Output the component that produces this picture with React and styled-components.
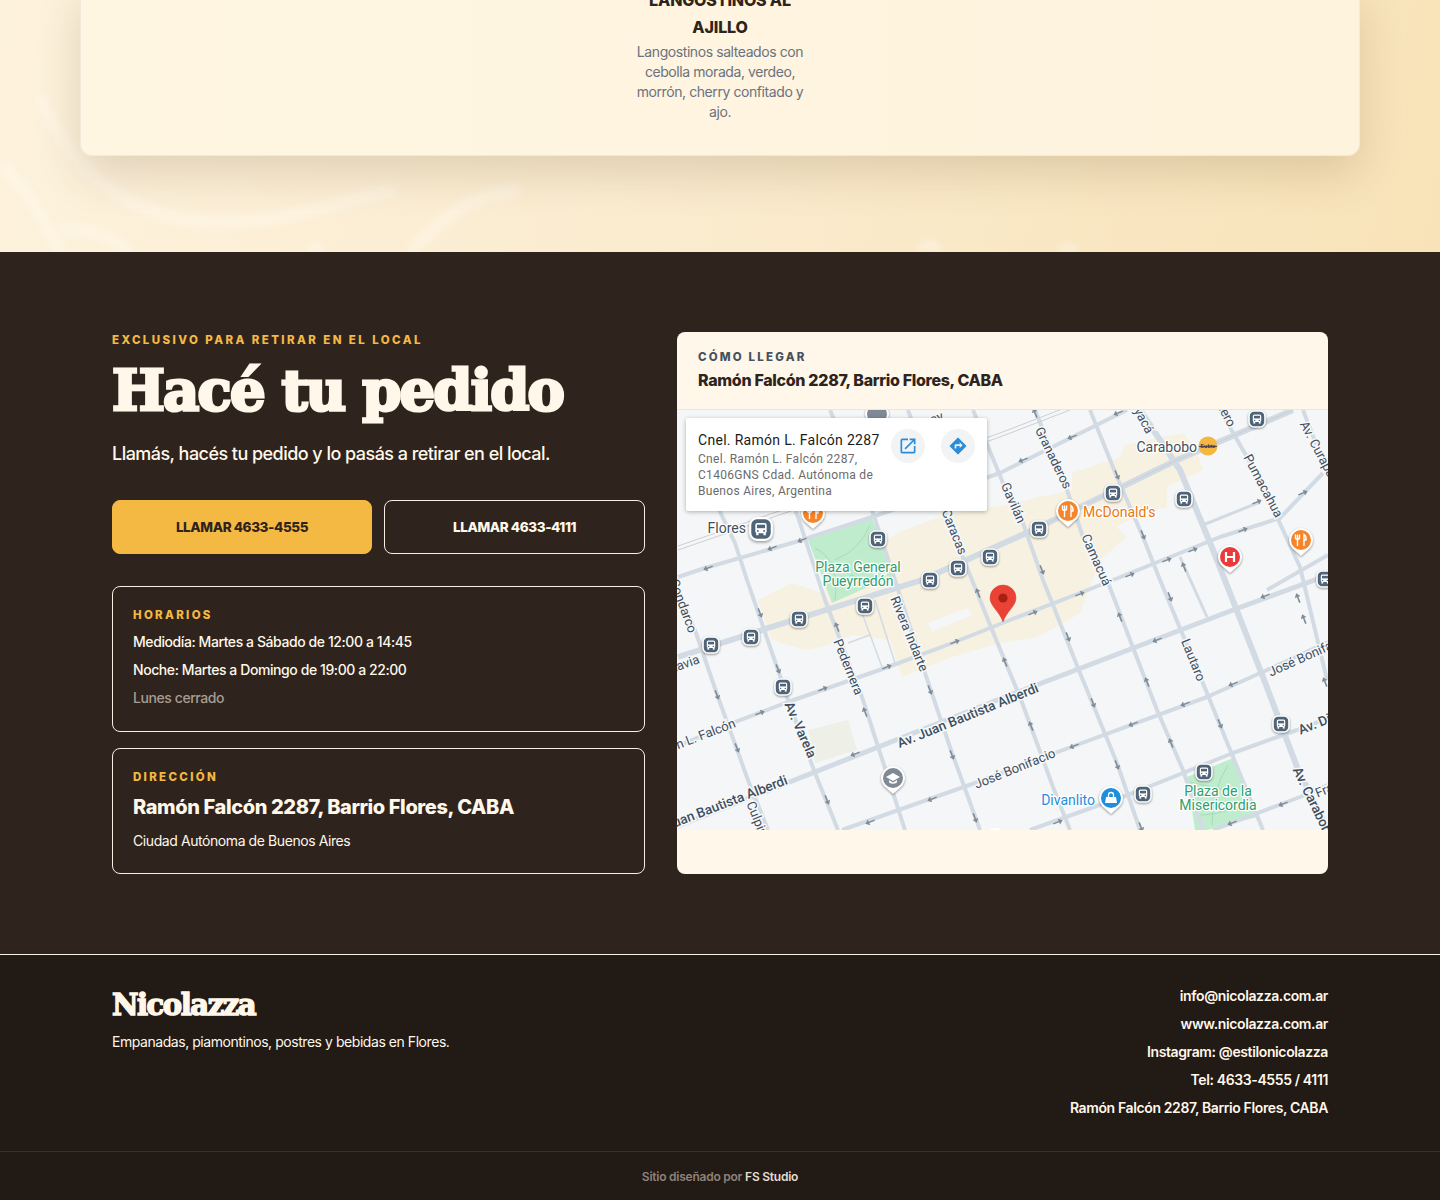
import styled, { createGlobalStyle } from 'styled-components'

const GlobalStyle = createGlobalStyle`
    html, body {
        margin: 0;
        padding: 0;
        background: #211a15;
    }
    body {
        font-family: Inter, "Noto Sans", sans-serif;
    }
    * {
        box-sizing: border-box;
    }
`

const MenuSection = styled.section`
    position: relative;
    height: 252px;
    overflow: hidden;
    display: flex;
    flex-direction: column;
    justify-content: flex-end;
    padding: 0 80px 96px 80px;
    background: linear-gradient(100deg, #fdf2dc 0%, #fbecd0 45%, #f8e3b8 100%);
`
const Swirls = styled.svg`
    position: absolute;
    left: 0;
    top: 0;
    filter: blur(3px);
`
const MenuCard = styled.div`
    position: relative;
    display: flex;
    justify-content: center;
    padding: 0 0 33px;
    background: linear-gradient(90deg, #fff6e2, #fef3dd);
    border: 1px solid #f1e9da;
    border-radius: 0 0 12px 12px;
    box-shadow: 0 18px 45px rgba(80, 50, 15, 0.16);
`
const Dish = styled.div`
    width: 180px;
    text-align: center;
`
const DishName = styled.h3`
    margin: 0 0 1px;
    font-size: 16px;
    line-height: 27px;
    font-weight: 800;
    letter-spacing: -0.01em;
    color: #2e241c;
    text-transform: uppercase;
`
const DishText = styled.p`
    margin: 0;
    font-size: 14px;
    line-height: 20px;
    letter-spacing: -0.03em;
    color: #6b7280;
`

const OrderSection = styled.section`
    background: #2e241d;
    padding: 80px 112px;
    border-bottom: 1px solid #f6efe2;
    display: grid;
    grid-template-columns: 533px 651px;
    gap: 32px;
`
const LeftColumn = styled.div`
    display: flex;
    flex-direction: column;
    min-width: 0;
`
const Eyebrow = styled.div`
    font-size: 11.5px;
    line-height: 16px;
    font-weight: 800;
    letter-spacing: 0.21em;
    text-transform: uppercase;
    color: #f4b942;
`
const Heading = styled.h2`
    margin: 6px 0 0;
    font-family: "DejaVu Serif", "Liberation Serif", serif;
    font-size: 56px;
    line-height: 72px;
    font-weight: 700;
    letter-spacing: -0.032em;
    color: #fff7ea;
    -webkit-text-stroke: 3px #fff7ea;
`
const Lead = styled.p`
    margin: 14px 0 0;
    font-size: 18px;
    line-height: 28px;
    font-weight: 500;
    letter-spacing: -0.03em;
    color: #fff7ea;
`
const Buttons = styled.div`
    display: grid;
    grid-template-columns: 260px 1fr;
    gap: 12px;
    margin-top: 32px;
`
const CallButton = styled.a`
    height: 54px;
    display: flex;
    align-items: center;
    justify-content: center;
    border-radius: 8px;
    font-size: 13.5px;
    font-weight: 800;
    letter-spacing: -0.03em;
    color: ${(p) => (p.$primary ? '#2e241d' : '#fff7ea')};
    background: ${(p) => (p.$primary ? '#f4b942' : 'transparent')};
    border: 1px solid ${(p) => (p.$primary ? '#f4b942' : '#f6efe2')};
`
const InfoCard = styled.div`
    margin-top: ${(p) => p.$top}px;
    padding: 20px 20px ${(p) => p.$bottom}px;
    border: 1px solid #f6efe2;
    border-radius: 8px;
`
const InfoLabel = styled.div`
    font-size: 11.5px;
    line-height: 16px;
    font-weight: 800;
    letter-spacing: 0.2em;
    text-transform: uppercase;
    color: #f4b942;
`
const InfoLine = styled.p`
    margin: 8px 0 0;
    font-size: 14px;
    line-height: 20px;
    font-weight: 500;
    letter-spacing: -0.03em;
    color: ${(p) => (p.$muted ? '#a89c92' : '#fff7ea')};
    ${InfoLabel} + & {
        margin-top: 9px;
    }
`
const InfoTitle = styled.div`
    margin-top: 8px;
    font-size: 20px;
    line-height: 28px;
    font-weight: 800;
    letter-spacing: -0.02em;
    color: #fff7ea;
`
const InfoNote = styled.p`
    margin: 10px 0 0;
    font-size: 14px;
    line-height: 20px;
    letter-spacing: -0.03em;
    color: #fff7ea;
`

const MapCard = styled.div`
    background: #fff7ea;
    border-radius: 8px;
    overflow: hidden;
    display: flex;
    flex-direction: column;
`
const MapHeader = styled.div`
    height: 78px;
    padding: 17px 21px 0;
    border-bottom: 1px solid #ebe6dc;
`
const MapLabel = styled.div`
    font-size: 11.5px;
    line-height: 16px;
    font-weight: 800;
    letter-spacing: 0.19em;
    text-transform: uppercase;
    color: #45525e;
`
const MapTitle = styled.div`
    margin-top: 4px;
    font-size: 16px;
    line-height: 22px;
    font-weight: 800;
    letter-spacing: -0.02em;
    color: #2e241d;
`
const MapFrame = styled.div`
    position: relative;
    height: 420px;
    overflow: hidden;
`
const MapSvg = styled.svg`
    display: block;
    background: #f5f6f7;
`
const Road = styled.polyline`
    fill: none;
    stroke: #d2dbe3;
    stroke-linejoin: round;
`
const Rail = styled.polyline`
    fill: none;
    stroke: #c9d0d6;
    stroke-width: 1;
`
const RoadLabel = styled.text`
    font-family: Roboto, sans-serif;
    font-size: ${(p) => (p.$bold ? 13.5 : 13)}px;
    font-weight: ${(p) => (p.$bold ? 500 : 400)};
    fill: #3e4f60;
    stroke: #f7f8f9;
    stroke-width: 3px;
    paint-order: stroke;
    text-anchor: ${(p) => p.$anchor || 'middle'};
`
const PlaceLabel = styled.text`
    font-family: Roboto, sans-serif;
    font-size: 14px;
    fill: ${(p) => p.$color};
    stroke: #fff;
    stroke-width: 2.5px;
    paint-order: stroke;
    text-anchor: ${(p) => p.$anchor || 'middle'};
`
const SubteText = styled.text`
    font-family: "Liberation Sans", sans-serif;
    font-size: 5.5px;
    font-weight: 700;
    fill: #3a2f55;
    text-anchor: middle;
`
const Marker = styled.g`
    filter: drop-shadow(0 1px 1px rgba(0, 0, 0, 0.4));
`
const Popup = styled.div`
    position: absolute;
    left: 9px;
    top: 8px;
    width: 301px;
    height: 93px;
    padding: 14px 12px;
    display: flex;
    background: #fff;
    border-radius: 2px;
    box-shadow: 0 1px 4px rgba(0, 0, 0, 0.3);
    font-family: Roboto, sans-serif;
`
const PopupText = styled.div`
    width: 196px;
`
const PopupName = styled.div`
    font-size: 14px;
    line-height: 16px;
    letter-spacing: 0.3px;
    color: #1a1a1a;
`
const PopupAddress = styled.div`
    margin-top: 3px;
    font-size: 12px;
    line-height: 16px;
    letter-spacing: 0.3px;
    color: #6b6b6b;
`
const PopupActions = styled.div`
    display: flex;
    gap: 16px;
    margin-top: -3px;
    margin-left: 1px;
`
const ActionCircle = styled.div`
    width: 34px;
    height: 34px;
    border-radius: 50%;
    background: #f1f3f4;
    display: flex;
    align-items: center;
    justify-content: center;
`

const Footer = styled.footer`
    background: #211a15;
`
const FooterMain = styled.div`
    height: 196px;
    padding: 32px 112px 0;
    display: flex;
    justify-content: space-between;
`
const Brand = styled.div`
    font-family: "DejaVu Serif", "Liberation Serif", serif;
    font-size: 29px;
    line-height: 36px;
    font-weight: 700;
    letter-spacing: -0.05em;
    color: #fff7ea;
    -webkit-text-stroke: 1.5px #fff7ea;
`
const Tagline = styled.p`
    margin: 9px 0 0;
    font-size: 14px;
    line-height: 20px;
    letter-spacing: -0.032em;
    color: #fff7ea;
`
const Contact = styled.div`
    display: flex;
    flex-direction: column;
    align-items: flex-end;
    gap: 8px;
    margin-top: -1px;
`
const ContactLine = styled.a`
    font-size: 14px;
    line-height: 20px;
    font-weight: 600;
    letter-spacing: -0.027em;
    color: #fff7ea;
`
const FooterBottom = styled.div`
    height: 49px;
    border-top: 1px solid #3a2f25;
    display: flex;
    align-items: center;
    justify-content: center;
    font-size: 12px;
    font-weight: 600;
    letter-spacing: -0.02em;
    color: #8f8279;
`
const Studio = styled.span`
    margin-left: 3px;
    color: #e6ddd2;
`

const roads = [
    // streets running lower-left to upper-right
    { w: 6, pts: '678,657 768,628 922,580 1033,530 1177,460 1293,410' },
    { w: 5, pts: '678,826 1005,697 1233,610 1328,575' },
    { w: 4, pts: '1267,590 1328,555' },
    { w: 4, pts: '680,745 735,722 788,702 888,667 955,642 1005,622 1080,593 1113,580 1220,537 1280,518 1323,473' },
    { w: 3, pts: '1203,525 1260,502' },
    { w: 4, pts: '842,830 975,783 1055,753 1207,697 1267,670 1328,642' },
    { w: 4, pts: '1030,830 1133,793 1233,753 1297,730 1328,718' },
    { w: 4, pts: '1213,830 1300,797 1328,785' },
    { w: 4, pts: '678,577 705,568 802,540 872,517 1000,473 1127,410' },
    // streets running upper-left to lower-right
    { w: 4, pts: '678,590 696,633 718,697 748,780 768,830' },
    { w: 4, pts: '700,470 735,543 747,580 778,670 788,700 815,773 838,830' },
    { w: 4, pts: '770,450 798,517 825,600 862,697 905,830' },
    { w: 4, pts: '830,410 872,510 895,580 925,673 952,753 980,830' },
    { w: 4, pts: '908,410 945,513 972,580 995,637 1020,697 1053,787 1070,830' },
    { w: 4, pts: '973,410 1003,483 1023,523 1043,580 1080,673 1117,763 1140,830' },
    { w: 4, pts: '1035,410 1067,490 1083,537 1107,580 1157,710 1183,770 1203,830' },
    { w: 4, pts: '1090,410 1117,477 1143,537 1160,580 1207,693 1233,757 1263,830' },
    { w: 3, pts: '1180,557 1207,617' },
    { w: 6, pts: '1140,410 1180,470 1213,550 1263,677 1297,767 1328,830' },
    { w: 4, pts: '1220,410 1247,457 1277,517 1300,567 1327,680' },
    { w: 4, pts: '1303,410 1328,475' },
]
const thinRoads = ['862,613 882,667', '875,600 895,663', '848,643 870,635']
const rails = ['678,550 788,512 1000,437 1070,410', '678,546 788,508 1000,433 1070,406', '1033,530 1177,460 1293,410']

const arrows = [
    [708, 568, 'l'], [772, 548, 'l'], [802, 540, 'l'], [1118, 413, 'l'], [1072, 437, 'l'], [1023, 460, 'l'],
    [1035, 413, 'u'], [1117, 475, 'd'], [1143, 535, 'd'], [1042, 570, 'd'], [1257, 502, 'r'], [1303, 493, 'r'],
    [1243, 530, 'r'], [1193, 550, 'r'], [1167, 560, 'r'], [1130, 575, 'r'], [1184, 567, 'u'], [760, 613, 'd'],
    [778, 669, 'd'], [717, 695, 'd'], [737, 748, 'd'], [760, 713, 'r'], [823, 689, 'r'], [887, 667, 'r'],
    [955, 642, 'r'], [837, 627, 'u'], [865, 712, 'u'], [855, 754, 'l'], [930, 690, 'd'], [952, 755, 'd'],
    [975, 818, 'd'], [827, 800, 'd'], [932, 799, 'l'], [870, 822, 'l'], [978, 593, 'u'], [1033, 613, 'r'],
    [1080, 594, 'r'], [1068, 637, 'd'], [1005, 662, 'u'], [1120, 617, 'u'], [1147, 682, 'u'], [1157, 640, 'l'],
    [1170, 597, 'd'], [1233, 684, 'l'], [1185, 704, 'l'], [1133, 724, 'l'], [1074, 746, 'l'], [1093, 703, 'd'],
    [1031, 726, 'u'], [1117, 765, 'd'], [1171, 743, 'u'], [1220, 724, 'd'], [1058, 822, 'r'], [1141, 827, 'd'],
    [1283, 804, 'l'], [1232, 823, 'l'], [1265, 596, 'l'], [1298, 598, 'u'], [1304, 619, 'u'], [1325, 682, 'u'],
]
const arrowAngle = { r: -22, l: 158, d: 68, u: -112 }

const busStops = [
    [878, 539], [958, 568], [990, 557], [930, 580], [1257, 419], [1113, 493], [1184, 499], [1039, 529],
    [799, 619], [751, 637], [711, 645], [783, 687], [865, 606], [1281, 724], [1204, 772], [1143, 794], [1325, 579],
]

const labels = [
    ['Granaderos', 1053, 462, 64],
    ['Gavilán', 1013, 507, 66],
    ['Camacuá', 1096, 564, 66],
    ['Caracas', 954, 536, 68],
    ['Boyacá', 1140, 418, 62],
    ['Pumacahua', 1263, 490, 62],
    ['Condarco', 683, 610, 70],
    ['Rivera Indarte', 909, 638, 68],
    ['Pedernera', 848, 671, 68],
    ['Lautaro', 1193, 664, 68],
    ['José Bonifacio', 1015, 773, -22],
]

function BusStop({ x, y, big }) {
    const s = big ? 1.35 : 1
    return (
        <Marker transform={`translate(${x} ${y}) scale(${s})`}>
            <rect x="-8" y="-8" width="16" height="16" rx="5" fill="#4f6479" stroke="#fff" strokeWidth="1.6" />
            <rect x="-4.2" y="-4.5" width="8.4" height="7.6" rx="1.5" fill="#fff" />
            <rect x="-3" y="-3.2" width="6" height="2.6" fill="#4f6479" />
            <circle cx="-2.3" cy="1.4" r=".7" fill="#4f6479" />
            <circle cx="2.3" cy="1.4" r=".7" fill="#4f6479" />
            <rect x="-3.6" y="3" width="1.8" height="1.6" fill="#fff" />
            <rect x="1.8" y="3" width="1.8" height="1.6" fill="#fff" />
        </Marker>
    )
}

function Pin({ x, y, color, children }) {
    return (
        <Marker transform={`translate(${x} ${y})`}>
            <path d="M0 16 L-9 8 A12 12 0 1 1 9 8 Z" fill="#fff" />
            <circle r="10" fill={color} />
            {children}
        </Marker>
    )
}

function Fork() {
    return (
        <g stroke="#fff" strokeWidth="1.4" fill="none" strokeLinecap="round">
            <path d="M-3.5 -5 V-1.5 M-1.5 -5 V-1.5 M-5.5 -5 V-1.5 M-5.5 -1.5 Q-3.5 0.5 -1.5 -1.5 M-3.5 -1 V5.5" />
            <path d="M3 5.5 V-5.5 Q5.5 -4 5 0 L3 0" />
        </g>
    )
}

function MapDrawing() {
    return (
        <MapSvg width="651" height="420" viewBox="677 410 651 420">
            <polygon
                fill="#f7f1e1"
                points="758,600 792,583 822,593 875,545 905,530 945,515 1005,505 1040,497 1072,490 1072,473 1120,457 1125,445 1183,433 1197,450 1203,470 1167,487 1167,507 1140,513 1117,527 1127,537 1100,560 1080,613 1063,623 1037,637 1000,643 952,657 902,677 890,640 852,635 822,647 805,650 772,640"
            />
            <polygon fill="#f5f6f7" points="928,623 968,608 972,615 932,632" />
            <polygon fill="#eef0e7" points="808,730 848,720 857,750 815,763" />
            <polygon fill="#c0ecce" points="808,540 872,518 895,575 832,603" />
            <polygon fill="#c0ecce" points="1187,777 1233,758 1257,817 1207,830 1195,830" />
            <g fill="none" stroke="#a5dcb8" strokeWidth="1">
                <path d="M815 548 Q840 560 835 600 M835 560 Q860 550 870 525 M850 575 L885 585" />
                <path d="M1190 782 L1225 790 M1228 765 Q1212 790 1212 825 M1200 815 Q1225 815 1250 800" />
            </g>
            {thinRoads.map((pts) => <Road key={pts} points={pts} strokeWidth="1.5" />)}
            {roads.map((r) => <Road key={r.pts} points={r.pts} strokeWidth={r.w} />)}
            {rails.map((pts) => <Rail key={pts} points={pts} />)}
            {arrows.map(([x, y, dir]) => (
                <path
                    key={`${x}-${y}`}
                    d="M-5 -0.8 H1 V-3 L5 0 L1 3 V0.8 H-5 Z"
                    fill="#7f8c98"
                    transform={`translate(${x} ${y}) rotate(${arrowAngle[dir]})`}
                />
            ))}

            {labels.map(([text, x, y, angle]) => (
                <RoadLabel key={text + x} x={x} y={y} transform={`rotate(${angle} ${x} ${y - 4})`}>{text}</RoadLabel>
            ))}
            <RoadLabel $bold x="968" y="720" transform="rotate(-22 968 716)">Av. Juan Bautista Alberdi</RoadLabel>
            <RoadLabel $bold $anchor="end" x="787" y="784" transform="rotate(-21 787 780)">Av. Juan Bautista Alberdi</RoadLabel>
            <RoadLabel $anchor="end" x="735" y="727" transform="rotate(-21 735 723)">Cnel. Ramón L. Falcón</RoadLabel>
            <RoadLabel $anchor="end" x="699" y="663" transform="rotate(-20 699 659)">Av. Rivadavia</RoadLabel>
            <RoadLabel $bold x="800" y="734" transform="rotate(66 800 730)">Av. Varela</RoadLabel>
            <RoadLabel $anchor="start" x="750" y="806" transform="rotate(68 750 802)">Culpina</RoadLabel>
            <RoadLabel $bold $anchor="start" x="1296" y="772" transform="rotate(64 1296 768)">Av. Carabobo</RoadLabel>
            <RoadLabel $anchor="start" x="1303" y="426" transform="rotate(62 1303 422)">Av. Curapaligüe</RoadLabel>
            <RoadLabel $anchor="start" x="1269" y="677" transform="rotate(-24 1269 673)">José Bonifacio</RoadLabel>
            <RoadLabel $bold $anchor="start" x="1299" y="735" transform="rotate(-22 1299 731)">Av. Directorio</RoadLabel>
            <RoadLabel $anchor="start" x="1316" y="798" transform="rotate(-22 1316 794)">Francisco</RoadLabel>
            <RoadLabel $anchor="end" x="1232" y="430" transform="rotate(62 1232 426)">Homero</RoadLabel>
            <RoadLabel $anchor="end" x="943" y="420" transform="rotate(-20 943 416)">Gualeguay</RoadLabel>

            <PlaceLabel $color="#3e4f60" $anchor="end" x="746" y="533">Flores</PlaceLabel>
            <PlaceLabel $color="#3e4f60" $anchor="end" x="1197" y="452">Carabobo</PlaceLabel>
            <PlaceLabel $color="#e8780f" $anchor="start" x="1083" y="517">McDonald's</PlaceLabel>
            <PlaceLabel $color="#2f9e6e" x="858" y="572">Plaza General</PlaceLabel>
            <PlaceLabel $color="#2f9e6e" x="858" y="586">Pueyrredón</PlaceLabel>
            <PlaceLabel $color="#2f9e6e" x="1218" y="796">Plaza de la</PlaceLabel>
            <PlaceLabel $color="#2f9e6e" x="1218" y="810">Misericordia</PlaceLabel>
            <PlaceLabel $color="#1d8fdd" $anchor="end" x="1095" y="805">Divanlito</PlaceLabel>

            {busStops.map(([x, y]) => <BusStop key={`${x}-${y}`} x={x} y={y} />)}
            <BusStop x={761} y={529} big />

            <circle cx="1208" cy="446" r="9.5" fill="#f4b73f" />
            <path d="M1199 446.5 H1217" stroke="#3a2f55" strokeWidth=".8" />
            <SubteText x="1208" y="448">Subte</SubteText>

            <Pin x={813} y={513} color="#f5842a"><Fork /></Pin>
            <Pin x={1068} y={511} color="#f5842a"><Fork /></Pin>
            <Pin x={1301} y={540} color="#f5842a"><Fork /></Pin>
            <Pin x={1230} y={557} color="#e83c3c">
                <path d="M-4 -5 V5 M4 -5 V5 M-4 0 H4" stroke="#fff" strokeWidth="2.2" fill="none" />
            </Pin>
            <Pin x={1111} y={798} color="#1d8fdd">
                <path d="M-5 -1 H5 L6 5 H-6 Z" fill="#fff" />
                <path d="M-2.5 -1 V-3 A2.5 2.5 0 0 1 2.5 -3 V-1" stroke="#fff" strokeWidth="1.3" fill="none" />
            </Pin>
            <Pin x={893} y={778} color="#7f8a96">
                <path d="M-7 -1 L0 -5 L7 -1 L0 3 Z" fill="#fff" />
                <path d="M-4 2 V4.5 Q0 7 4 4.5 V2 L0 4.5 Z" fill="#fff" />
            </Pin>
            <Pin x={877} y={414} color="#7f8a96" />
            <circle cx="995" cy="838" r="10" fill="#fff" />

            <path
                d="M1003 622 C1000 612 990 606 990 598 A13 13 0 1 1 1016 598 C1016 606 1006 612 1003 622 Z"
                fill="#ea4335"
                stroke="#d33a2c"
                strokeWidth=".5"
            />
            <circle cx="1003" cy="598" r="4.6" fill="#a81f14" />
        </MapSvg>
    )
}

export default function App() {
    return (
        <>
            <GlobalStyle />
            <MenuSection>
                <Swirls width="1440" height="252" viewBox="0 0 1440 252" aria-hidden="true">
                    <g fill="none" stroke="#fff8ea" strokeOpacity=".45" strokeWidth="14">
                        <path d="M40 95 C70 170 130 225 230 222 C300 220 340 200 395 190" />
                        <path d="M0 165 C30 190 45 225 60 252" />
                        <path d="M60 230 C90 225 115 240 130 252" />
                        <path d="M520 190 C470 195 445 215 410 252" />
                    </g>
                    <path d="M305 252 Q315 230 325 252 Z M915 252 Q930 225 945 252 Z M1055 252 Q1068 232 1082 252 Z" fill="#fff" fillOpacity=".3" />
                </Swirls>
                <MenuCard>
                    <Dish>
                        <DishName>Langostinos al ajillo</DishName>
                        <DishText>Langostinos salteados con cebolla morada, verdeo, morrón, cherry confitado y ajo.</DishText>
                    </Dish>
                </MenuCard>
            </MenuSection>

            <OrderSection>
                <LeftColumn>
                    <Eyebrow>Exclusivo para retirar en el local</Eyebrow>
                    <Heading>Hacé tu pedido</Heading>
                    <Lead>Llamás, hacés tu pedido y lo pasás a retirar en el local.</Lead>
                    <Buttons>
                        <CallButton $primary>LLAMAR 4633-4555</CallButton>
                        <CallButton>LLAMAR 4633-4111</CallButton>
                    </Buttons>
                    <InfoCard $top={32} $bottom={23}>
                        <InfoLabel>Horarios</InfoLabel>
                        <InfoLine>Mediodía: Martes a Sábado de 12:00 a 14:45</InfoLine>
                        <InfoLine>Noche: Martes a Domingo de 19:00 a 22:00</InfoLine>
                        <InfoLine $muted>Lunes cerrado</InfoLine>
                    </InfoCard>
                    <InfoCard $top={16} $bottom={22}>
                        <InfoLabel>Dirección</InfoLabel>
                        <InfoTitle>Ramón Falcón 2287, Barrio Flores, CABA</InfoTitle>
                        <InfoNote>Ciudad Autónoma de Buenos Aires</InfoNote>
                    </InfoCard>
                </LeftColumn>

                <MapCard>
                    <MapHeader>
                        <MapLabel>Cómo llegar</MapLabel>
                        <MapTitle>Ramón Falcón 2287, Barrio Flores, CABA</MapTitle>
                    </MapHeader>
                    <MapFrame>
                        <MapDrawing />
                        <Popup>
                            <PopupText>
                                <PopupName>Cnel. Ramón L. Falcón 2287</PopupName>
                                <PopupAddress>Cnel. Ramón L. Falcón 2287, C1406GNS Cdad. Autónoma de Buenos Aires, Argentina</PopupAddress>
                            </PopupText>
                            <PopupActions>
                                <ActionCircle>
                                    <svg width="20" height="20" viewBox="0 0 24 24" fill="#2b8cd8">
                                        <path d="M19 19H5V5h7V3H5a2 2 0 0 0-2 2v14a2 2 0 0 0 2 2h14a2 2 0 0 0 2-2v-7h-2v7zM14 3v2h3.59l-9.83 9.83 1.41 1.41L19 6.41V10h2V3h-7z" />
                                    </svg>
                                </ActionCircle>
                                <ActionCircle>
                                    <svg width="20" height="20" viewBox="0 0 24 24" fill="#2b8cd8">
                                        <path d="M21.71 11.29l-9-9a1 1 0 0 0-1.42 0l-9 9a1 1 0 0 0 0 1.42l9 9a1 1 0 0 0 1.42 0l9-9a1 1 0 0 0 0-1.42zM14 14.5V12h-4v3H8v-4a1 1 0 0 1 1-1h5V7.5l3.5 3.5-3.5 3.5z" />
                                    </svg>
                                </ActionCircle>
                            </PopupActions>
                        </Popup>
                    </MapFrame>
                </MapCard>
            </OrderSection>

            <Footer>
                <FooterMain>
                    <div>
                        <Brand>Nicolazza</Brand>
                        <Tagline>Empanadas, piamontinos, postres y bebidas en Flores.</Tagline>
                    </div>
                    <Contact>
                        <ContactLine>info@nicolazza.com.ar</ContactLine>
                        <ContactLine>www.nicolazza.com.ar</ContactLine>
                        <ContactLine>Instagram: @estilonicolazza</ContactLine>
                        <ContactLine>Tel: 4633-4555 / 4111</ContactLine>
                        <ContactLine>Ramón Falcón 2287, Barrio Flores, CABA</ContactLine>
                    </Contact>
                </FooterMain>
                <FooterBottom>
                    Sitio diseñado por<Studio>FS Studio</Studio>
                </FooterBottom>
            </Footer>
        </>
    )
}
